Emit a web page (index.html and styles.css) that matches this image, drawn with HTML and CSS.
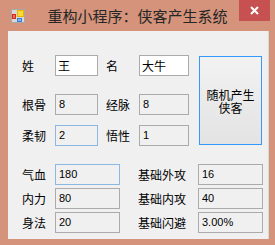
FILE: index.html
```
<!DOCTYPE html>
<html lang="zh">
<head>
<meta charset="utf-8">
<title>重构小程序：侠客产生系统</title>
<link rel="stylesheet" href="styles.css">
</head>
<body>
<div class="window">
  <div class="titlebar">
    <svg class="appicon" width="14" height="14" viewBox="0 0 14 14">
      <rect x="0.5" y="0.5" width="13" height="13" fill="#d8d8d8" stroke="#a8a8a8"/>
      <rect x="1" y="5" width="4" height="5" fill="#d42a1e"/>
      <rect x="2" y="6" width="2" height="3" fill="#f26b55"/>
      <rect x="6" y="1" width="7" height="7" fill="#e8b400"/>
      <rect x="7" y="2" width="5" height="5" fill="#ffd83a"/>
      <rect x="6" y="9" width="5" height="4" fill="#3b7fd9"/>
      <rect x="7" y="10" width="3" height="2" fill="#7fb1f0"/>
    </svg>
    <div class="title">重构小程序：侠客产生系统</div>
    <div class="close">
      <svg width="9" height="9" viewBox="0 0 9 9"><path d="M1 1L8 8M8 1L1 8" stroke="#fff" stroke-width="2"/></svg>
    </div>
  </div>
  <div class="client">
    <div class="top">
      <div class="fields">
        <div class="row r1">
          <span class="lbl">姓</span><span class="box edit w43">王</span>
          <span class="lbl l2">名</span><span class="box edit w50">大牛</span>
        </div>
        <div class="row r2">
          <span class="lbl">根骨</span><span class="box num w43">8</span>
          <span class="lbl l2">经脉</span><span class="box num w50">8</span>
        </div>
        <div class="row r3">
          <span class="lbl">柔韧</span><span class="box num hot w43">2</span>
          <span class="lbl l2">悟性</span><span class="box num w50">1</span>
        </div>
      </div>
      <button class="gen"><span class="gl">随机产生</span><span class="gl">侠客</span></button>
    </div>
    <div class="stats">
      <div class="srow">
        <span class="lbl">气血</span><span class="box num hot w65">180</span>
        <span class="lbl s2">基础外攻</span><span class="box num w65">16</span>
      </div>
      <div class="srow">
        <span class="lbl">内力</span><span class="box num w65">80</span>
        <span class="lbl s2">基础内攻</span><span class="box num w65">40</span>
      </div>
      <div class="srow">
        <span class="lbl">身法</span><span class="box num w65">20</span>
        <span class="lbl s2">基础闪避</span><span class="box num w65">3.00%</span>
      </div>
    </div>
  </div>
</div>
</body>
</html>
```
FILE: styles.css
```
* { box-sizing: border-box; }
html, body { margin: 0; padding: 0; }
body { width: 275px; height: 245px; overflow: hidden; background: #d4937a; font-family: "Noto Sans CJK SC", sans-serif; }
.window { width: 275px; height: 245px; background: #d4937a; display: flex; flex-direction: column; }
.titlebar { height: 31px; display: grid; grid-template-columns: 1fr auto 1fr; align-items: start; }
.appicon { justify-self: start; margin: 9px 0 0 11px; display: block; }
.title { font-size: 15px; line-height: 15px; color: #262626; margin-top: 8px; white-space: nowrap; }
.close { justify-self: end; width: 31px; height: 21px; background: #c75050; margin-right: 5px; display: flex; align-items: center; justify-content: center; }
.close svg { display: block; }
.client { margin: 0 6px 6px 8px; height: 208px; background: #f0f0f0; border-right: 1px solid #d8d8d8; }
.top { display: flex; align-items: flex-start; }
.fields { padding-left: 14px; width: 181px; padding-top: 24px; }
.row { display: flex; align-items: center; height: 21px; }
.r2 { margin-top: 18px; }
.r3 { margin-top: 10px; }
.lbl { font-size: 12px; color: #000; width: 33px; white-space: nowrap; line-height: 14px; }
.l2 { margin-left: 8px; }
.box { height: 21px; border: 1px solid #ababab; background: #f0f0f0; font-size: 12px; line-height: 19px; padding-left: 2px; color: #000; font-family: "Noto Sans CJK SC", sans-serif; white-space: nowrap; overflow: hidden; }
.num { font-family: "Liberation Sans", sans-serif; font-size: 11px; padding-left: 3px; }
.edit { background: #fff; }
.hot { border-color: #8db7e3; }
.w43 { width: 43px; }
.w50 { width: 50px; }
.w65 { width: 65px; }
.gen { margin: 25px 0 0 10px; width: 63px; height: 89px; border: 1px solid #3399ff; background: linear-gradient(#f2f2f2, #e3e3e3); font-family: "Noto Sans CJK SC", sans-serif; font-size: 12px; color: #000; padding: 0; display: flex; flex-direction: column; align-items: center; justify-content: center; }
.gl { display: block; line-height: 13px; height: 13px; }
.stats { padding: 18px 0 0 14px; display: flex; flex-direction: column; gap: 3px; }
.srow { display: flex; align-items: center; height: 21px; }
.s2 { width: 60px; margin-left: 18px; }
```
